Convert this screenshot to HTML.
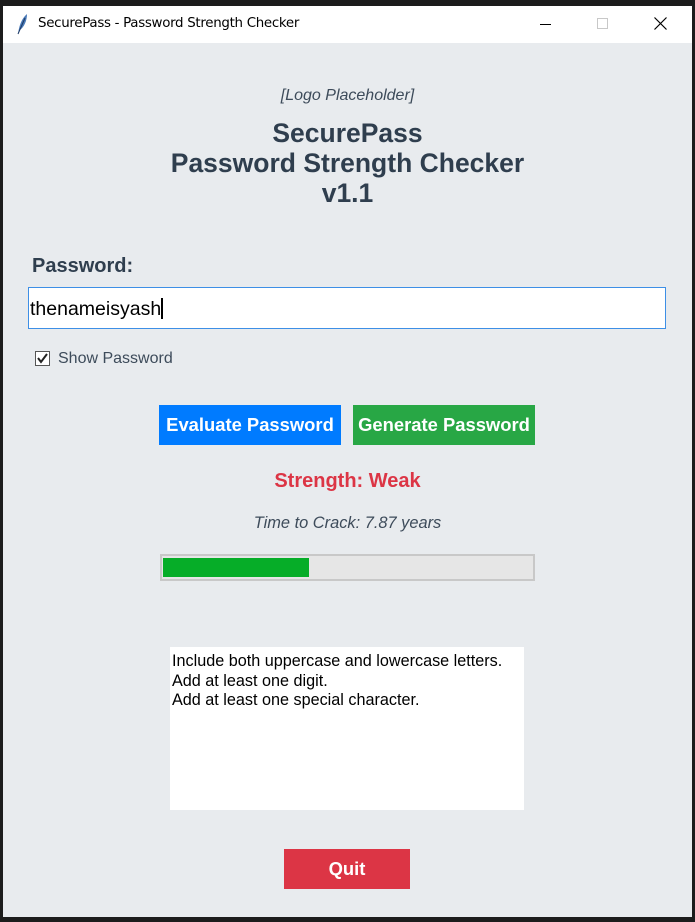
<!DOCTYPE html>
<html><head><meta charset="utf-8"><style>
*{margin:0;padding:0;box-sizing:border-box}
body{width:695px;height:922px;background:#1c1c1c;position:relative;overflow:hidden;font-family:"Liberation Sans",sans-serif}
.win{position:absolute;left:3px;top:6px;width:689px;height:911px;background:#e8ebee}
.tb{position:absolute;left:0;top:0;width:689px;height:37px;background:#fff}
.abs{position:absolute;white-space:nowrap}
.c{left:0;width:689px;text-align:center}
.btn{position:absolute;color:#fff;font-weight:bold;font-size:18.4px;text-align:center;line-height:40px}
</style></head><body>
<div class="win">
 <div class="tb">
  <svg class="abs" style="left:12px;top:7px" width="14" height="22" viewBox="0 0 14 22"><path d="M3 21 C4 14 6 6 12 1 C12 8 9 14 5 17 Z" fill="#4a7ab8"/><path d="M3 21 L10 5" stroke="#1d3a66" stroke-width="1"/></svg>
  <div class="abs" style="left:35px;top:10px;font-size:13.4px;color:#000;font-family:'DejaVu Sans','Liberation Sans',sans-serif;letter-spacing:-0.3px">SecurePass - Password Strength Checker</div>
  <div class="abs" style="left:537px;top:18px;width:11px;height:1px;background:#000"></div>
  <div class="abs" style="left:594px;top:12px;width:11px;height:11px;border:1px solid #c8c8c8"></div>
  <svg class="abs" style="left:651px;top:11px" width="13" height="13"><path d="M0.5 0.5L12.5 12.5M12.5 0.5L0.5 12.5" stroke="#000" stroke-width="1.2"/></svg>
 </div>
 <div class="abs c" style="top:81px;font-size:16px;font-style:italic;color:#3d4b5a">[Logo Placeholder]</div>
 <div class="abs c" style="top:112px;font-size:26.5px;font-weight:bold;color:#2f3e4e;line-height:30px">SecurePass<br>Password Strength Checker<br>v1.1</div>
 <div class="abs" style="left:29px;top:249px;font-size:20px;font-weight:bold;color:#2f3e4e">Password:</div>
 <div class="abs" style="left:25px;top:281px;width:638px;height:42px;background:#fff;border:1px solid #3d8fe6"></div>
 <div class="abs" style="left:27px;top:292px;font-size:19.5px;color:#000">thenameisyash<span style="display:inline-block;width:2px;height:21px;background:#000;vertical-align:-4px"></span></div>
 <div class="abs" style="left:32px;top:345px;width:15px;height:15px;background:#fff;border:1px solid #555"></div>
 <svg class="abs" style="left:34px;top:347px" width="11" height="11"><path d="M1 5 L4 9 L10 1" stroke="#222" stroke-width="2" fill="none"/></svg>
 <div class="abs" style="left:55px;top:344px;font-size:16px;color:#3d4b5a">Show Password</div>
 <div class="btn" style="left:156px;top:399px;width:182px;height:40px;background:#007bff">Evaluate Password</div>
 <div class="btn" style="left:350px;top:399px;width:182px;height:40px;background:#28a745">Generate Password</div>
 <div class="abs c" style="top:464px;font-size:20px;font-weight:bold;color:#dc3545">Strength: Weak</div>
 <div class="abs c" style="top:508px;font-size:16.4px;font-style:italic;color:#3d4b5a">Time to Crack: 7.87 years</div>
 <div class="abs" style="left:157px;top:548px;width:375px;height:27px;background:#e6e6e6;border:2px solid #c8c8c8"></div>
 <div class="abs" style="left:160px;top:552px;width:146px;height:19px;background:#06ad28"></div>
 <div class="abs" style="left:167px;top:641px;width:354px;height:163px;background:#fff"></div>
 <div class="abs" style="left:169px;top:646px;font-size:16.2px;line-height:19.5px;color:#000">Include both uppercase and lowercase letters.<br>Add at least one digit.<br>Add at least one special character.</div>
 <div class="btn" style="left:281px;top:843px;width:126px;height:40px;background:#dc3545">Quit</div>
</div>
</body></html>
